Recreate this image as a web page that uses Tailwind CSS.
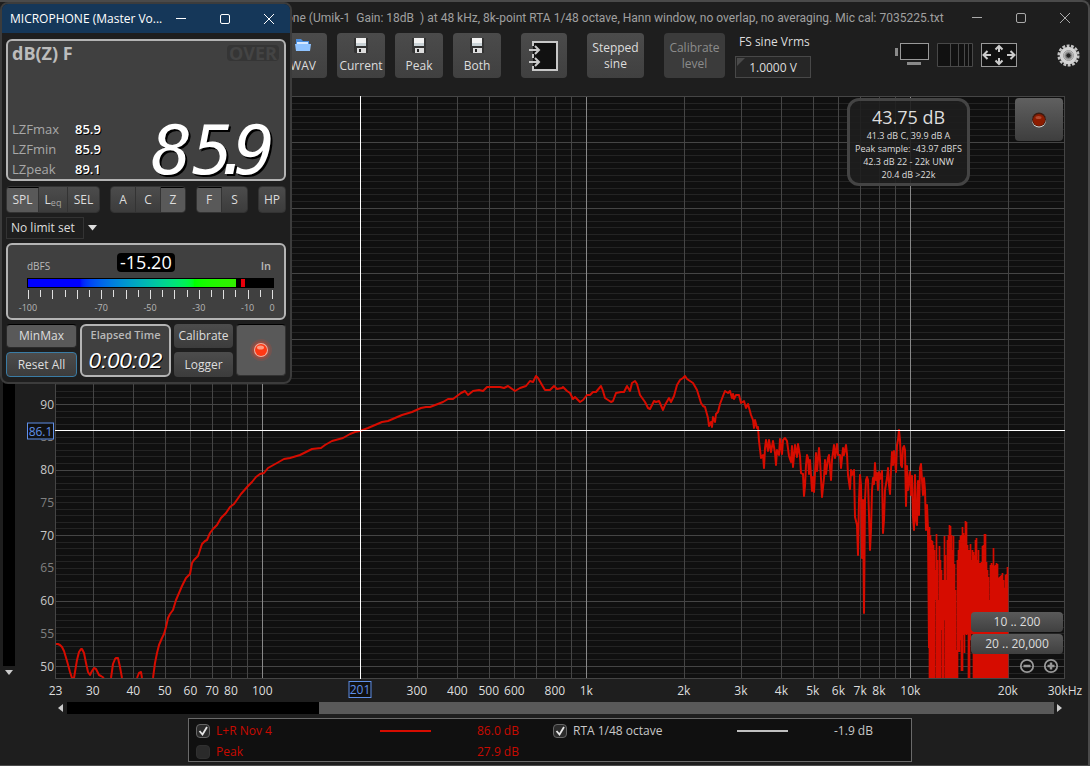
<!DOCTYPE html>
<html lang="en">

<head>
    <meta charset="UTF-8">
    <meta name="viewport" content="width=device-width, initial-scale=1.0">
    <title>RTA</title>
    <script src="https://cdn.jsdelivr.net/npm/@tailwindcss/browser@4"></script>
</head>

<body class="bg-[#1e1e1e] font-['Open_Sans',sans-serif] text-xs text-[#dddddd]">
    <!-- analyser window -->
    <div class="min-h-screen flex flex-col border-t-2 border-r-2 border-b border-[#4a4a4a] rounded-tr-lg">
        <header class="h-[31px] flex items-center pl-[286px] pr-[17px] text-[#a0a0a0]">
            <h1 class="whitespace-pre grow font-[Roboto,sans-serif]">one (Umik-1  Gain: 18dB  ) at 48 kHz, 8k-point RTA 1/48 octave, Hann window, no overlap, no averaging. Mic cal: 7035225.txt</h1>
            <div class="flex gap-8">
                <button aria-label="Minimize"><svg class="size-3" viewBox="0 0 12 12" stroke="#aaa" fill="none"><path d="M1 5.5h10" /></svg></button>
                <button aria-label="Maximize"><svg class="size-3" viewBox="0 0 12 12" stroke="#aaa" fill="none"><rect x="1.5" y="1.5" width="9" height="9" rx="1.5" /></svg></button>
                <button aria-label="Close"><svg class="size-3" viewBox="0 0 12 12" stroke="#aaa" fill="none"><path d="M1 1l10 10M11 1L1 11" /></svg></button>
            </div>
        </header>

        <div class="h-[63px] flex items-start pl-[279px] pr-2">
            <div class="flex gap-[10px]">
                <button class="w-12 h-[45px] rounded bg-linear-to-b from-[#4b4b4b] to-[#404040] flex flex-col items-center justify-between pt-[5px] pb-1 leading-4">
                    <svg class="w-4 h-[14px]" viewBox="0 0 16 14"><path d="M1 1h5l2 2h6v4H1z" fill="#4b8fe0" /><path d="M0 6h16l-1 7H1z" fill="#8fc3ff" /><path d="M2 4h11v2H2z" fill="#d5e8ff" /></svg>
                    <span>WAV</span>
                </button>
                <button class="w-12 h-[45px] rounded bg-linear-to-b from-[#4b4b4b] to-[#404040] flex flex-col items-center justify-between pt-[5px] pb-1 leading-4">
                    <svg class="w-[14px] h-[15px]" viewBox="0 0 14 15"><path d="M0 0h14v15H1l-1-1z" fill="#333" /><path d="M2 0h10v8H2z" fill="#f2f2f2" /><path d="M2 5h10v3H2z" fill="#c9d2d6" /><path d="M3 10h9v5H3z" fill="#ddd" /><path d="M5 11h2v3H5z" fill="#222" /></svg>
                    <span>Current</span>
                </button>
                <button class="w-12 h-[45px] rounded bg-linear-to-b from-[#4b4b4b] to-[#404040] flex flex-col items-center justify-between pt-[5px] pb-1 leading-4">
                    <svg class="w-[14px] h-[15px]" viewBox="0 0 14 15"><path d="M0 0h14v15H1l-1-1z" fill="#333" /><path d="M2 0h10v8H2z" fill="#f2f2f2" /><path d="M2 5h10v3H2z" fill="#c9d2d6" /><path d="M3 10h9v5H3z" fill="#ddd" /><path d="M5 11h2v3H5z" fill="#222" /></svg>
                    <span>Peak</span>
                </button>
                <button class="w-12 h-[45px] rounded bg-linear-to-b from-[#4b4b4b] to-[#404040] flex flex-col items-center justify-between pt-[5px] pb-1 leading-4">
                    <svg class="w-[14px] h-[15px]" viewBox="0 0 14 15"><path d="M0 0h14v15H1l-1-1z" fill="#333" /><path d="M2 0h10v8H2z" fill="#f2f2f2" /><path d="M2 5h10v3H2z" fill="#c9d2d6" /><path d="M3 10h9v5H3z" fill="#ddd" /><path d="M5 11h2v3H5z" fill="#222" /></svg>
                    <span>Both</span>
                </button>
            </div>
            <button class="ml-5 w-[46px] h-[45px] rounded bg-linear-to-b from-[#4b4b4b] to-[#404040] grid place-items-center" aria-label="Signal input">
                <svg class="w-[30px] h-[30px]" viewBox="0 0 30 30" fill="none" stroke="#c8c8c8" stroke-width="2">
                    <path d="M4 1h24v28H4z" fill="#111" stroke="none" />
                    <path d="M4 5V1h24v28H4v-4M4 13v4" />
                    <path d="M0 9h10M6 5l4 4-4 4M0 21h10M6 17l4 4-4 4" />
                </svg>
            </button>
            <button class="ml-5 w-[57px] h-[45px] rounded bg-linear-to-b from-[#4b4b4b] to-[#404040] leading-4">Stepped<br>sine</button>
            <button class="ml-5 w-[61px] h-[45px] rounded bg-[#3b3b3b] text-[#8c8c8c] leading-4" disabled>Calibrate<br>level</button>
            <div class="ml-[10px]">
                <label for="vrms" class="block h-[23px] leading-[18px] pl-1 whitespace-nowrap">FS sine Vrms</label>
                <div class="relative">
                    <input id="vrms" value="1.0000 V" class="block w-[76px] h-[22px] border border-[#484848] bg-[#262626] text-center">
                    <svg class="absolute left-[2px] top-[2px] size-2" viewBox="0 0 8 8"><path d="M0 0h8L0 8z" fill="#4a4a4a" /></svg>
                </div>
            </div>
            <div class="ml-auto mt-[9px] flex items-center">
                <button class="mr-2" aria-label="Scrollbars"><svg class="w-[34px] h-[26px]" viewBox="0 0 34 26"><path d="M0 6h3v8H0zM12 20h14v3H12z" fill="#8a8a8a" /><rect x="5.5" y="1.5" width="28" height="16" fill="#111" stroke="#999" /></svg></button>
                <button class="mr-2" aria-label="Frequency axis"><svg class="w-9 h-[26px]" viewBox="0 0 36 26"><path d="M.5 1.5h35v23H.5zM13.500 1v23M21.500 1v23M27.500 1v23M31.500 1v23" fill="#111" stroke="#484848" /></svg></button>
                <button class="mr-10" aria-label="Graph limits"><svg class="w-9 h-[26px]" viewBox="0 0 36 26"><rect x=".5" y="1.500" width="35" height="23" fill="#111" stroke="#999" /><path d="M10 13H3M6.500 9L2.500 13l4 4M26 13h7M29.500 9l4 4-4 4M18 10V4M14.500 7.500L18 4l3.500 3.500M18 16v6M14.500 18.500L18 22l3.500-3.500" fill="none" stroke="#ccc" stroke-width="2" /></svg></button>
                <button aria-label="Controls"><svg class="size-[23px]" viewBox="-11.500 -11.500 23 23"><circle r="9.800" fill="none" stroke="#c4c4c4" stroke-width="2.500" stroke-dasharray="2.900 1.500" /><circle r="6.500" fill="#999" stroke="#d4d4d4" stroke-width="4.500" /><circle r="5" fill="none" stroke="#999" /><circle r="2.600" fill="#222" stroke="#777" /></svg></button>
            </div>
        </div>

        <main class="grow flex flex-col">
            <div class="grow flex pr-[23px]">
                <div class="w-[15px] pl-[3px] flex flex-col">
                    <div class="grow bg-black"></div>
                    <svg class="h-[13px]" viewBox="0 0 12 13"><path d="M2 4h8l-4 5z" fill="#ccc" /></svg>
                </div>
                <div id="dbAxis" class="relative w-10">
                </div>
                <div class="relative grow">
                    <svg id="plot" class="absolute inset-0 w-full h-full bg-[#101010]" viewBox="55 96 1010 583" preserveAspectRatio="none">
                        <path id="minor" stroke="#242424" shape-rendering="crispEdges" />
                        <path id="major" stroke="#454545" shape-rendering="crispEdges" />
                        <path id="decade" stroke="#888888" shape-rendering="crispEdges" />
                        <path id="trace" fill="none" stroke="#d60c00" stroke-width="2" stroke-linejoin="round" />
                        <path id="noise" fill="none" stroke="#d60c00" stroke-width="1.700" />
                        <rect x="55.500" y="96.500" width="1009" height="582" fill="none" stroke="#454545" />
                        <path d="M360.500 96V679M55 430.500H1065" stroke="#ffffff" shape-rendering="crispEdges" />
                    </svg>
                    <div class="absolute right-[95px] top-[2px] w-[123px] rounded-xl border-3 border-[#444444] bg-[#1e1e1e]/90 pt-[5px] pb-[2px] text-center text-[9px] leading-[13px] whitespace-nowrap">
                        <p class="text-lg leading-[23px]">43.75 dB</p>
                        <p>41.3 dB C, 39.9 dB A</p>
                        <p>Peak sample: -43.97 dBFS</p>
                        <p>42.3 dB 22 - 22k UNW</p>
                        <p>20.4 dB &gt;22k</p>
                    </div>
                    <button class="absolute right-[2px] top-[2px] w-12 h-[43px] rounded bg-linear-to-b from-[#606060] to-[#3e3e3e] grid place-items-center" aria-label="Record">
                        <svg class="size-4" viewBox="0 0 16 16"><circle cx="8" cy="8.500" r="7" fill="#ddd" /><circle cx="8" cy="7.500" r="7" fill="#3a1a10" /><circle cx="8" cy="8" r="6" fill="#8c1c00" /><ellipse cx="7.500" cy="5.500" rx="3" ry="1.500" fill="#b04a30" /></svg>
                    </button>
                    <div class="absolute right-[2px] bottom-[5px] w-[92px] flex flex-col gap-[2px]">
                        <button class="h-5 rounded bg-linear-to-b from-[#5a5a5a] to-[#404040]">10 .. 200</button>
                        <button class="h-5 rounded bg-linear-to-b from-[#5a5a5a] to-[#404040]">20 .. 20,000</button>
                        <div class="flex justify-end gap-2 pt-[2px] pr-1">
                            <button aria-label="Zoom out"><svg class="size-4" viewBox="0 0 16 16" fill="none" stroke="#999"><circle cx="8" cy="8" r="6.200" stroke-width="1.800" /><path d="M4.500 8h7" stroke-width="2.500" /></svg></button>
                            <button aria-label="Zoom in"><svg class="size-4" viewBox="0 0 16 16" fill="none" stroke="#999"><circle cx="8" cy="8" r="6.200" stroke-width="1.800" /><path d="M4.500 8h7M8 4.500v7" stroke-width="2.500" /></svg></button>
                        </div>
                    </div>
                </div>
            </div>

            <div id="freqAxis" class="relative h-[23px] ml-[55px] mr-[23px]"></div>

            <div class="h-3 flex items-center pl-[57px] pr-6">
                <svg class="w-[10px] h-3" viewBox="0 0 10 12"><path d="M6 2v8L1 6z" fill="#ccc" /></svg>
                <div class="grow h-3 bg-black flex justify-end"><div class="w-[74.5%] bg-[#595959]"></div></div>
                <svg class="w-[10px] h-3" viewBox="0 0 10 12"><path d="M3 2v8l5-4z" fill="#ccc" /></svg>
            </div>
        </main>

        <footer class="mt-1 mb-[3px] ml-[188px] mr-[176px] h-11 border border-[#6a6a6a] bg-[#101010] flex pl-[7px] pt-[1px]">
            <div class="w-[357px] text-[#c80a00]">
                <div class="h-[21px] flex items-center">
                    <input type="checkbox" id="main" checked class="appearance-none size-[14px] rounded-sm border border-[#666666] bg-[#2b2b2b]">
                    <svg class="-ml-[14px] size-[14px] pointer-events-none" viewBox="0 0 14 14"><path d="M3.500 7l3 3.500L11 3" fill="none" stroke="#e8e8e8" stroke-width="1.800" /></svg>
                    <label for="main" class="ml-[6px] w-[164px]">L+R Nov 4</label>
                    <span class="w-[51px] h-[2px] bg-[#d60c00]"></span>
                    <span class="ml-[46px]">86.0 dB</span>
                </div>
                <div class="h-[21px] flex items-center">
                    <input type="checkbox" id="peak" class="appearance-none size-[14px] rounded-sm border border-[#303030] bg-[#2a2a2a]">
                    <label for="peak" class="ml-[6px] w-[261px]">Peak</label>
                    <span>27.9 dB</span>
                </div>
            </div>
            <div class="h-[21px] flex items-center text-[#c8c8c8]">
                <input type="checkbox" id="rta" checked class="appearance-none size-[14px] rounded-sm border border-[#666666] bg-[#2b2b2b]">
                <svg class="-ml-[14px] size-[14px] pointer-events-none" viewBox="0 0 14 14"><path d="M3.500 7l3 3.500L11 3" fill="none" stroke="#e8e8e8" stroke-width="1.800" /></svg>
                <label for="rta" class="ml-[6px] w-[164px]">RTA 1/48 octave</label>
                <span class="w-[51px] h-[2px] bg-[#c0c0c0]"></span>
                <span class="ml-[46px]">-1.9 dB</span>
            </div>
        </footer>
    </div>

    <!-- SPL meter window -->
    <section class="absolute left-0 top-[2px] w-[292px] rounded-lg border-2 border-[#3c3c3c] bg-[#1e1e1e] overflow-hidden">
        <header class="h-[29px] bg-[#153759] text-white flex items-center pl-2 pr-[15px]">
            <h2 class="grow">MICROPHONE (Master Vo...</h2>
            <div class="flex gap-8">
                <button aria-label="Minimize"><svg class="size-3" viewBox="0 0 12 12" stroke="#fff" fill="none"><path d="M1 5.500h10" /></svg></button>
                <button aria-label="Maximize"><svg class="size-3" viewBox="0 0 12 12" stroke="#fff" fill="none"><rect x="1.500" y="1.500" width="9" height="9" rx="1.500" /></svg></button>
                <button aria-label="Close"><svg class="size-3" viewBox="0 0 12 12" stroke="#fff" fill="none"><path d="M1 1l10 10M11 1L1 11" /></svg></button>
            </div>
        </header>

        <div class="px-1 pt-[6px] pb-[5px]">
            <div class="h-[142px] rounded-md border-2 border-[#b4b4b4] bg-[#404040] flex flex-col justify-between pl-1 pr-[9px]">
                <div class="flex justify-between items-start">
                    <h3 class="text-lg leading-6 font-bold text-[#bcbcbc]">dB(Z) F</h3>
                    <span class="mt-1 -mr-1 rounded bg-[#353535] px-[2px] text-lg leading-4 font-bold text-[#444444]">OVER</span>
                </div>
                <div class="flex justify-between items-end">
                    <dl class="grid grid-cols-[63px_auto] text-[13px] leading-[20px]">
                        <dt class="text-[#a8a8a8]">LZFmax</dt>
                        <dd class="font-semibold text-white text-shadow-[1px_1px_0_#000000]">85.9</dd>
                        <dt class="text-[#a8a8a8]">LZFmin</dt>
                        <dd class="font-semibold text-white text-shadow-[1px_1px_0_#000000]">85.9</dd>
                        <dt class="text-[#a8a8a8]">LZpeak</dt>
                        <dd class="font-semibold text-white text-shadow-[1px_1px_0_#000000]">89.1</dd>
                    </dl>
                    <output class="font-['DejaVu_Sans_Mono',monospace] italic text-[68px] leading-[56px] text-white text-shadow-[2px_2px_0_#000000]">85<span class="-mx-5">.</span>9</output>
                </div>
            </div>

            <div class="mt-[5px] flex justify-between">
                <div class="flex rounded overflow-hidden border border-[#333333] divide-x divide-[#333333] h-[27px]">
                    <button class="w-8 bg-[#595959] border-t border-t-black">SPL</button>
                    <button class="w-[29px] bg-linear-to-b from-[#4c4c4c] to-[#3c3c3c]">L<sub class="text-[9px] text-[#a8a8a8]">eq</sub></button>
                    <button class="w-[31px] bg-linear-to-b from-[#4c4c4c] to-[#3c3c3c]">SEL</button>
                </div>
                <div class="flex rounded overflow-hidden border border-[#333333] divide-x divide-[#333333] h-[27px]">
                    <button class="w-[25px] bg-linear-to-b from-[#4c4c4c] to-[#3c3c3c]">A</button>
                    <button class="w-[25px] bg-linear-to-b from-[#4c4c4c] to-[#3c3c3c]">C</button>
                    <button class="w-6 bg-[#595959] border-t border-t-black">Z</button>
                </div>
                <div class="flex rounded overflow-hidden border border-[#333333] divide-x divide-[#333333] h-[27px]">
                    <button class="w-[25px] bg-[#595959] border-t border-t-black">F</button>
                    <button class="w-[25px] bg-linear-to-b from-[#4c4c4c] to-[#3c3c3c]">S</button>
                </div>
                <button class="w-7 h-[27px] rounded border border-[#333333] bg-linear-to-b from-[#4c4c4c] to-[#3c3c3c]">HP</button>
            </div>

            <div class="mt-1 flex items-center">
                <select aria-label="Limit" class="appearance-none w-[78px] h-[22px] border border-[#333333] pl-1">
                    <option>No limit set</option>
                </select>
                <svg class="ml-1 w-[9px] h-[6px]" viewBox="0 0 9 6"><path d="M0 0h9L4.500 5.500z" fill="#ddd" /></svg>
            </div>

            <div class="mt-1 h-[77px] rounded-md border-2 border-[#b4b4b4] bg-[#404040] text-[#b8b8b8]">
                <div class="mt-2 ml-[19px] mr-[13px] grid grid-cols-[90px_auto_1fr] items-end text-[10px] leading-3">
                    <span>dBFS</span>
                    <span class="rounded bg-black px-[3px] text-lg leading-[19px] text-white">-15.20</span>
                    <span class="justify-self-end text-[11px] font-semibold">In</span>
                </div>
                <div class="mt-[6px] mx-[19px] w-[247px] h-[10px] border border-black bg-black relative">
                    <div class="h-full w-[85%] bg-linear-to-r from-[#0000ff] from-25% via-[#00ff00] via-80% to-[#33ee00]"></div>
                    <div class="absolute inset-y-0 left-[87%] w-1 bg-red-600"></div>
                </div>
                <svg class="ml-[19px] w-[247px] h-[14px]" viewBox="0 0 247 14" shape-rendering="crispEdges"><path id="ticks" stroke="#e0e0e0" /></svg>
                <div id="meterLabels" class="relative ml-[20px] w-[244px] h-3 text-[9px]"></div>
            </div>

            <div class="mt-1 flex gap-[3px]">
                <div class="w-[71px] flex flex-col gap-1">
                    <button class="h-6 rounded-sm border border-[#2a2a2a] border-t-black bg-[#595959]">MinMax</button>
                    <button class="h-[25px] rounded border border-[#3a7ca5] bg-linear-to-b from-[#4c4c4c] to-[#3c3c3c]">Reset All</button>
                </div>
                <div class="w-[91px] h-[53px] rounded-md border-2 border-[#b4b4b4] bg-[#404040] text-center">
                    <p class="text-[11px] leading-[17px] font-semibold text-[#b8b8b8]">Elapsed Time</p>
                    <time class="block font-['Liberation_Sans',sans-serif] italic text-[22px] leading-[36px] text-white text-shadow-[1px_1px_0_#000000]">0:00:02</time>
                </div>
                <div class="w-[59px] flex flex-col gap-1">
                    <button class="h-6 rounded bg-linear-to-b from-[#4c4c4c] to-[#3c3c3c]">Calibrate</button>
                    <button class="h-[25px] rounded bg-linear-to-b from-[#4c4c4c] to-[#3c3c3c]">Logger</button>
                </div>
                <button class="grow h-[52px] rounded border border-[#333333] border-t-black bg-[#595959] grid place-items-center" aria-label="Start SPL meter">
                    <svg class="size-6" viewBox="0 0 24 24"><circle cx="12" cy="12" r="11" fill="#ff3b20" opacity=".15" /><circle cx="12" cy="12" r="9" fill="#ff3b20" opacity=".25" /><circle cx="12" cy="12" r="7" fill="#f0b0a0" /><circle cx="12" cy="12" r="6" fill="#ff3814" /><ellipse cx="11.500" cy="9.500" rx="3.500" ry="2" fill="#ff9a80" /></svg>
                </button>
            </div>
        </div>
    </section>

    <script>
        const xOf = f => 55.5 + 324 * Math.log10(f / 23);
        const yOf = db => 404.5 + (90 - db) * 6.55;
        const set = (id, d) => document.getElementById(id).setAttribute("d", d);

        // grid
        let minor = "", major = "", decade = "";
        for (let db = 49; db < 137; db++) {
            const line = `M55 ${Math.floor(yOf(db)) + 0.5}H1065`;
            if (db % 10 === 0) major += line; else minor += line;
        }
        for (const base of [10, 100, 1000, 10000]) {
            for (let n = 1; n < 10; n++) {
                const f = base * n;
                if (f < 24 || f > 29000) continue;
                const line = `M${Math.floor(xOf(f) + 0.3) + 0.5} 96V679`;
                if (n === 1) decade += line; else major += line;
            }
        }
        set("minor", minor);
        set("major", major);
        set("decade", decade);

        // level trace, one polyline per visible run
        const runs = [
            "55,644 58,644 60,645 62,647 64,651 67,661 70,672 72,678 74,678 77,660 79,652 81,649 82,649 84,653 86,663 88,672 90,675 92,671 94,668 96,669 99,675 101,676 104,678",
            "111,678 113,664 115,659 116,658 118,658 120,667 122,678",
            "137,678 139,673 141,672 142,678",
            "153,678 155,663 157,653 159,645 162,638 164,634 166,627 168,618 170,614 173,610 176,600 182,586 186,578 190,574 192,563 194,560 198,556 202,544 205,541 207,540 210,533 213,529 217,525 221,518 226,513 230,507 234,504 241,494 248,486 252,482 256,477 260,474 264,473 268,468 277,463 284,459 290,458 300,455 312,449 321,448 325,445 332,441 343,438 350,434 355,432 360,431 368,428 382,422 388,421 402,415 412,412 421,408 426,407 430,407 443,402 448,399 453,399 461,393 465,391 468,395 473,391 479,390 483,391 487,387 500,387 504,388 508,386 515,391 520,388 526,386 530,381 533,382 536,376 538,378 542,385 545,390 550,390 554,386 557,389 562,388 563,387 567,391 570,393 573,399 575,397 580,402 583,400 587,395 590,395 593,392 596,392 601,386 603,391 605,398 611,402 613,401 616,393 621,392 624,392 627,386 630,391 632,383 635,381 637,384 640,395 645,402 648,408 650,409 654,401 656,402 659,401 663,410 665,405 669,398 671,402 674,396 677,385 680,380 683,378 685,376 687,379 693,383 697,390 701,403 703,406 705,407 708,418 709,426 711,422 712,427 713,417 715,422 716,414 718,412 720,404 723,396 725,391 728,393 730,391 732,398 733,394 734,399 736,395 739,395 741,403 744,401 746,408 748,404 751,415 753,420 754,428 755,420 757,428 758,427 759,441 761,458 763,455 764,468 765,448 766,440 768,451 769,440 771,452 773,441 775,453 776,465 777,450 779,455 780,439 782,454 783,440 785,438 787,441 789,456 791,462 792,446 793,467 795,445 797,457 798,444 800,456 801,473 803,474 804,496 805,486 806,465 807,455 808,458 809,474 810,460 812,491 813,477 814,492 815,473 816,453 817,471 819,448 820,460 822,497 824,478 825,460 826,474 828,458 829,455 831,480 832,460 834,445 835,458 837,444 838,455 840,455 841,468 843,448 844,455 846,445 847,454 848,475 850,489 851,470 852,475 854,470 855,517 857,525 858,555 859,500 860,475 861,485 862,558 863,500 864,613 865,500 866,480 867,477 868,480 870,550 871,530 872,490 873,478 874,484 875,463 876,480 877,473 878,490 879,472 880,479 882,471 883,533 884,520 885,490 887,478 888,468 889,485 890,494 891,470 892,452 893,465 894,451 896,472 897,445 898,440 899,430 900,440 901,465 902,467 903,448 904,446 905,450 906,506 907,466 908,490 910,472 911,495 912,476 913,517 914,530 915,475 916,520 917,525 918,481 919,515 920,468 921,464 922,480 923,495 924,478 925,490 926,530 927,505 928,530 929,648"
        ];
        set("trace", runs.map(run => "M" + run.split(" ").join("L")).join(""));

        // above 11 kHz the trace swings between these tops and the floor
        const tops = [527, 535, 540, 541, 545, 550, 570, 534, 560, 600, 546, 560, 570, 580, 580, 536, 555, 580, 540, 535, 525, 526, 535, 550, 536, 564, 590, 650, 560, 550, 540, 536, 535, 527, 533, 535, 521, 522, 545, 550, 550, 544, 560, 550, 552, 555, 540, 538, 560, 550, 563, 563, 562, 546, 545, 534, 534, 562, 570, 577, 600, 565, 563, 565, 548, 566, 565, 563, 564, 578, 577, 576, 575, 573, 580, 588, 575, 574, 567];
        const floors = { 935: 600, 941: 630, 944: 620, 958: 652, 959: 652, 960: 640, 961: 671, 962: 671, 963: 635, 964: 653, 965: 634, 966: 635, 967: 634, 970: 640, 971: 634, 972: 634 };
        set("noise", tops.map((top, i) => `M${929.5 + i} ${top}V${floors[929 + i] || 678}`).join(""));

        // axis labels
        const dbAxis = document.getElementById("dbAxis");
        for (let db = 50; db <= 90; db += 5) {
            const top = (yOf(db) - 96) / 5.83;
            const tone = db % 10 === 0 ? "text-[#c8c8c8]" : "text-[#808080]";
            dbAxis.innerHTML += `<span class="absolute right-[1px] -translate-y-1/2 leading-4 ${tone}" style="top:${top}%">${db}</span>`;
        }
        dbAxis.innerHTML += `<span class="absolute right-[1px] -translate-y-1/2 h-[17px] w-[27px] text-center leading-4 border border-[#6090e8] bg-[#101010] text-[#6090e8]" style="top:${(430.5 - 96) / 5.83}%">86.1</span>`;

        const freqAxis = document.getElementById("freqAxis");
        const freqs = { 23: "23", 30: "30", 40: "40", 50: "50", 60: "60", 70: "70", 80: "80", 100: "100", 300: "300", 400: "400", 500: "500", 600: "600", 800: "800", 1000: "1k", 2000: "2k", 3000: "3k", 4000: "4k", 5000: "5k", 6000: "6k", 7000: "7k", 8000: "8k", 10000: "10k", 20000: "20k", 30000: "30kHz" };
        for (const f in freqs) {
            freqAxis.innerHTML += `<span class="absolute top-1 -translate-x-1/2 leading-4" style="left:${(xOf(f) - 55) / 10.1}%">${freqs[f]}</span>`;
        }
        freqAxis.innerHTML += `<span class="absolute top-[2px] -translate-x-1/2 h-[17px] w-[23px] text-center leading-4 border border-[#6090e8] bg-[#101010] text-[#6090e8]" style="left:${(360 - 55) / 10.1}%">201</span>`;

        // level meter scale
        let ticks = "";
        for (let i = 0; i <= 20; i++) {
            ticks += `M${Math.round(i * 12.2) + 1.5} 2V${i % 2 ? 9 : 11}`;
        }
        set("ticks", ticks);
        const meterLabels = document.getElementById("meterLabels");
        for (const db of [-100, -70, -50, -30, -10, 0]) {
            meterLabels.innerHTML += `<span class="absolute -translate-x-1/2 leading-3" style="left:${100 + db}%">${db}</span>`;
        }
    </script>
</body>

</html>
